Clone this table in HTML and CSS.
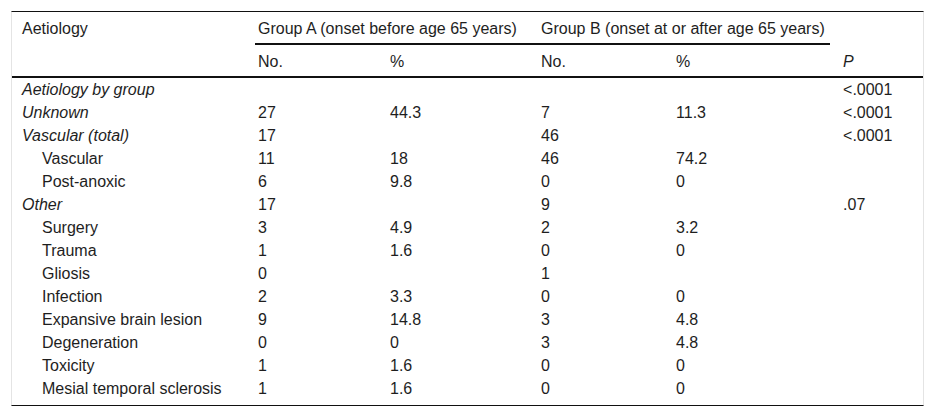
FILE: index.html
```html
<!DOCTYPE html>
<html>
<head>
<meta charset="utf-8">
<link rel="stylesheet" href="styles.css">
</head>
<body>
<div class="frame">
<table class="data">
<colgroup>
<col class="c-label"><col class="c-a-no"><col class="c-a-pct"><col class="c-b-no"><col class="c-b-pct"><col class="c-p">
</colgroup>
<thead>
<tr>
<th class="lbl top" rowspan="2">Aetiology</th>
<th class="grp" colspan="2">Group A (onset before age 65 years)</th>
<th class="grp" colspan="2">Group B (onset at or after age 65 years)</th>
<th class="pcol bottom" rowspan="2"><i>P</i></th>
</tr>
<tr class="sub">
<th>No.</th><th>%</th><th>No.</th><th>%</th>
</tr>
</thead>
<tbody>
<tr><td class="lbl it">Aetiology by group</td><td></td><td></td><td></td><td></td><td class="pcol">&lt;.0001</td></tr>
<tr><td class="lbl it">Unknown</td><td>27</td><td>44.3</td><td>7</td><td>11.3</td><td class="pcol">&lt;.0001</td></tr>
<tr><td class="lbl it">Vascular (total)</td><td>17</td><td></td><td>46</td><td></td><td class="pcol">&lt;.0001</td></tr>
<tr><td class="lbl ind">Vascular</td><td>11</td><td>18</td><td>46</td><td>74.2</td><td class="pcol"></td></tr>
<tr><td class="lbl ind">Post-anoxic</td><td>6</td><td>9.8</td><td>0</td><td>0</td><td class="pcol"></td></tr>
<tr><td class="lbl it">Other</td><td>17</td><td></td><td>9</td><td></td><td class="pcol">.07</td></tr>
<tr><td class="lbl ind">Surgery</td><td>3</td><td>4.9</td><td>2</td><td>3.2</td><td class="pcol"></td></tr>
<tr><td class="lbl ind">Trauma</td><td>1</td><td>1.6</td><td>0</td><td>0</td><td class="pcol"></td></tr>
<tr><td class="lbl ind">Gliosis</td><td>0</td><td></td><td>1</td><td></td><td class="pcol"></td></tr>
<tr><td class="lbl ind">Infection</td><td>2</td><td>3.3</td><td>0</td><td>0</td><td class="pcol"></td></tr>
<tr><td class="lbl ind">Expansive brain lesion</td><td>9</td><td>14.8</td><td>3</td><td>4.8</td><td class="pcol"></td></tr>
<tr><td class="lbl ind">Degeneration</td><td>0</td><td>0</td><td>3</td><td>4.8</td><td class="pcol"></td></tr>
<tr><td class="lbl ind">Toxicity</td><td>1</td><td>1.6</td><td>0</td><td>0</td><td class="pcol"></td></tr>
<tr class="last"><td class="lbl ind">Mesial temporal sclerosis</td><td>1</td><td>1.6</td><td>0</td><td>0</td><td class="pcol"></td></tr>
</tbody>
</table>
</div>
</body>
</html>
```
FILE: styles.css
```css
html, body {
  margin: 0;
  padding: 0;
  background: #fff;
}
body {
  padding: 11px 10px 0 11px;
  font-family: "Liberation Sans", Arial, sans-serif;
  font-size: 16px;
  color: #1e1e1e;
}
.frame {
  width: 911px;
  border-top: 1px solid #111;
  border-bottom: 1px solid #111;
  border-left: 1px solid #e4e4e4;
  border-right: 1px solid #e4e4e4;
}
.data {
  width: 911px;
  table-layout: fixed;
  border-collapse: collapse;
  border-spacing: 0;
}
.c-label { width: 243px; }
.c-a-no { width: 132px; }
.c-a-pct { width: 151px; }
.c-b-no { width: 135px; }
.c-b-pct { width: 157px; }
.c-p { width: 93px; }

.data th,
.data td {
  padding: 2px 3px;
  line-height: 19px;
  text-align: left;
  font-weight: normal;
  white-space: nowrap;
}
.data thead th {
  line-height: 18.75px;
  padding-top: 8px;
  padding-bottom: 4px;
}
.data th.grp {
  border-bottom: 2px solid #111;
}
.data tr.sub th,
.data th.top,
.data th.bottom {
  border-bottom: 2px solid #111;
}
.data th.top { vertical-align: top; }
.data th.bottom { vertical-align: bottom; }
.data .lbl { padding-left: 10px; }
.data .lbl.ind { padding-left: 30px; }
.data .it { font-style: italic; }
.data .pcol { padding-left: 13px; }
.data tr.last td { padding-bottom: 7px; }
```
